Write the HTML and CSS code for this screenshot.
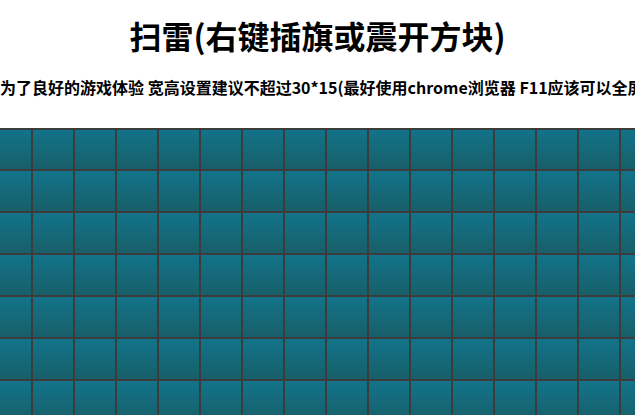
FILE: index.html
```html
<!DOCTYPE html>
<html lang="zh-CN">
<head>
<meta charset="utf-8">
<title>扫雷</title>
<link rel="stylesheet" href="styles.css">
</head>
<body>
<div class="page">
  <h1 class="title">扫雷(右键插旗或震开方块)</h1>
  <p class="tip">为了良好的游戏体验 宽高设置建议不超过30*15(最好使用chrome浏览器 F11应该可以全屏)</p>
  <div class="board">
    <div class="cell"></div><div class="cell"></div><div class="cell"></div><div class="cell"></div><div class="cell"></div><div class="cell"></div><div class="cell"></div><div class="cell"></div><div class="cell"></div><div class="cell"></div><div class="cell"></div><div class="cell"></div><div class="cell"></div><div class="cell"></div><div class="cell"></div><div class="cell"></div>
    <div class="cell"></div><div class="cell"></div><div class="cell"></div><div class="cell"></div><div class="cell"></div><div class="cell"></div><div class="cell"></div><div class="cell"></div><div class="cell"></div><div class="cell"></div><div class="cell"></div><div class="cell"></div><div class="cell"></div><div class="cell"></div><div class="cell"></div><div class="cell"></div>
    <div class="cell"></div><div class="cell"></div><div class="cell"></div><div class="cell"></div><div class="cell"></div><div class="cell"></div><div class="cell"></div><div class="cell"></div><div class="cell"></div><div class="cell"></div><div class="cell"></div><div class="cell"></div><div class="cell"></div><div class="cell"></div><div class="cell"></div><div class="cell"></div>
    <div class="cell"></div><div class="cell"></div><div class="cell"></div><div class="cell"></div><div class="cell"></div><div class="cell"></div><div class="cell"></div><div class="cell"></div><div class="cell"></div><div class="cell"></div><div class="cell"></div><div class="cell"></div><div class="cell"></div><div class="cell"></div><div class="cell"></div><div class="cell"></div>
    <div class="cell"></div><div class="cell"></div><div class="cell"></div><div class="cell"></div><div class="cell"></div><div class="cell"></div><div class="cell"></div><div class="cell"></div><div class="cell"></div><div class="cell"></div><div class="cell"></div><div class="cell"></div><div class="cell"></div><div class="cell"></div><div class="cell"></div><div class="cell"></div>
    <div class="cell"></div><div class="cell"></div><div class="cell"></div><div class="cell"></div><div class="cell"></div><div class="cell"></div><div class="cell"></div><div class="cell"></div><div class="cell"></div><div class="cell"></div><div class="cell"></div><div class="cell"></div><div class="cell"></div><div class="cell"></div><div class="cell"></div><div class="cell"></div>
    <div class="cell"></div><div class="cell"></div><div class="cell"></div><div class="cell"></div><div class="cell"></div><div class="cell"></div><div class="cell"></div><div class="cell"></div><div class="cell"></div><div class="cell"></div><div class="cell"></div><div class="cell"></div><div class="cell"></div><div class="cell"></div><div class="cell"></div><div class="cell"></div>
  </div>
</div>
</body>
</html>
```

FILE: styles.css
```css
html, body {
  margin: 0;
  padding: 0;
  background: #ffffff;
  overflow: hidden;
}
body {
  font-family: "Noto Sans CJK SC", "Noto Sans", sans-serif;
  color: #000000;
}
.page {
  width: 635px;
  height: 415px;
  overflow: hidden;
}
.title {
  margin: 0;
  padding-top: 12px;
  font-size: 32px;
  line-height: 46px;
  font-weight: 700;
  text-align: center;
}
.tip {
  margin: 17px 0 0 0;
  font-size: 16px;
  line-height: 24px;
  font-weight: 700;
  text-align: center;
  white-space: nowrap;
}
.board {
  margin-top: 29px;
  margin-left: -11px;
  display: grid;
  grid-template-columns: repeat(16, 40px);
  grid-template-rows: 39px repeat(6, 40px);
  gap: 2px;
  padding: 2px;
  width: max-content;
  background: #3c3c3c;
}
.cell {
  background: linear-gradient(to bottom, #12738a, #185f69);
}
```
